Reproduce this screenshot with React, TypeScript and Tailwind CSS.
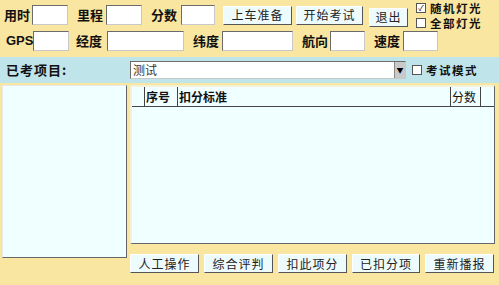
import React from "react"

const font = { fontFamily: '"Noto Sans CJK SC", "Noto Sans", sans-serif' }

function Box({ w }: { w: string }) {
  return <div className={`${w} h-[20px] bg-white border border-t-[#6b6b6b] border-l-[#6b6b6b] border-r-[#c8c8c8] border-b-[#c8c8c8]`} />
}

function Btn({ label, w }: { label: string; w: string }) {
  return (
    <button className={`${w} h-[19px] bg-[#eefbfd] border border-t-white border-l-white border-r-[#555] border-b-[#555] text-[12px] leading-none text-[#222] tracking-[1px]`}>
      {label}
    </button>
  )
}

function Check({ label, checked, h = "h-[13px]" }: { label: string; checked?: boolean; h?: string }) {
  return (
    <div className={`flex items-center gap-[4px] ${h}`}>
      <span className="w-[10px] h-[10px] bg-white border border-[#555] flex items-center justify-center text-[8px] leading-none text-black">
        {checked ? "✓" : ""}
      </span>
      <span className="text-[11.5px] font-bold leading-[14px] tracking-[1.5px] text-[#111]">{label}</span>
    </div>
  )
}

export default function App() {
  return (
    <div className="w-[499px] h-[285px] bg-[#f9e6a1] overflow-hidden text-[#111]" style={font}>
      {/* 顶部 */}
      <div className="h-[57px] pl-[4px] pt-[4px]">
        <div className="flex items-center h-[22px]">
          <span className="text-[13px] font-bold w-[28px]">用时</span>
          <Box w="w-[36px]" />
          <span className="text-[13px] font-bold ml-[9px] w-[29px]">里程</span>
          <Box w="w-[36px]" />
          <span className="text-[13px] font-bold ml-[9px] w-[30px]">分数</span>
          <Box w="w-[34px]" />
          <div className="ml-[8px] flex gap-[4px]">
            <Btn label="上车准备" w="w-[69px]" />
            <Btn label="开始考试" w="w-[67px]" />
          </div>
          <div className="ml-[6px]"><Btn label="退出" w="w-[39px]" /></div>
          <div className="ml-[8px] flex flex-col">
            <Check label="随机灯光" checked h="h-[15px]" />
            <Check label="全部灯光" h="h-[15px]" />
          </div>
        </div>
        <div className="flex items-center h-[22px] mt-[4px]">
          <span className="text-[13px] font-bold w-[29px] pl-[2px]" style={{ fontFamily: '"Liberation Sans", sans-serif' }}>GPS</span>
          <Box w="w-[36px]" />
          <span className="text-[13px] font-bold ml-[7px] w-[31px]">经度</span>
          <Box w="w-[77px]" />
          <span className="text-[13px] font-bold ml-[9px] w-[29px]">纬度</span>
          <Box w="w-[71px]" />
          <span className="text-[13px] font-bold ml-[9px] w-[28px]">航向</span>
          <Box w="w-[35px]" />
          <span className="text-[13px] font-bold ml-[9px] w-[29px]">速度</span>
          <Box w="w-[35px]" />
        </div>
      </div>

      {/* 已考项目栏 */}
      <div className="h-[26px] bg-[#bfe4ea] flex items-center pl-[6px]">
        <span className="text-[13px] font-bold w-[124px] tracking-[1px]">已考项目:</span>
        <div className="w-[276px] h-[18px] bg-white border border-t-[#6b6b6b] border-l-[#6b6b6b] border-r-[#c8c8c8] border-b-[#c8c8c8] flex items-center">
          <span className="flex-1 pl-[2px] text-[12px] leading-none text-[#333]">测试</span>
          <span className="w-[11px] h-[16px] bg-[#c9c9c9] border-l border-[#888] flex items-center justify-center text-[7px] text-black">▼</span>
        </div>
        <div className="ml-[6px]"><Check label="考试模式" h="h-[14px]" /></div>
      </div>

      {/* 主体 */}
      <div className="flex pl-[2px] pt-[2px] gap-[3px]">
        <div className="w-[125px] h-[173px] bg-[#f0ffff] border border-t-[#e8e8e8] border-l-[#e8e8e8] border-r-[#666] border-b-[#666]" />
        <div className="flex flex-col">
          <div className="w-[365px] h-[159px] bg-[#f0ffff] border-l-2 border-t-2 border-[#f5f0d8] border-r border-b border-r-[#666] border-b-[#666] flex flex-col">
            <div className="flex h-[20px] border-b border-[#444] text-[12px] font-bold leading-none">
              <div className="w-[13px] border-r border-[#444]" />
              <div className="w-[33px] border-r border-[#444] flex items-center pl-[1px]">序号</div>
              <div className="w-[273px] border-r border-[#444] flex items-center pl-[1px]">扣分标准</div>
              <div className="w-[30px] border-r border-[#444] flex items-center pl-[1px] font-normal">分数</div>
              <div className="flex-1" />
            </div>
          </div>
          <div className="flex gap-[5px] mt-[10px]">
            <Btn label="人工操作" w="w-[69px]" />
            <Btn label="综合评判" w="w-[69px]" />
            <Btn label="扣此项分" w="w-[69px]" />
            <Btn label="已扣分项" w="w-[68px]" />
            <Btn label="重新播报" w="w-[69px]" />
          </div>
        </div>
      </div>
    </div>
  )
}
